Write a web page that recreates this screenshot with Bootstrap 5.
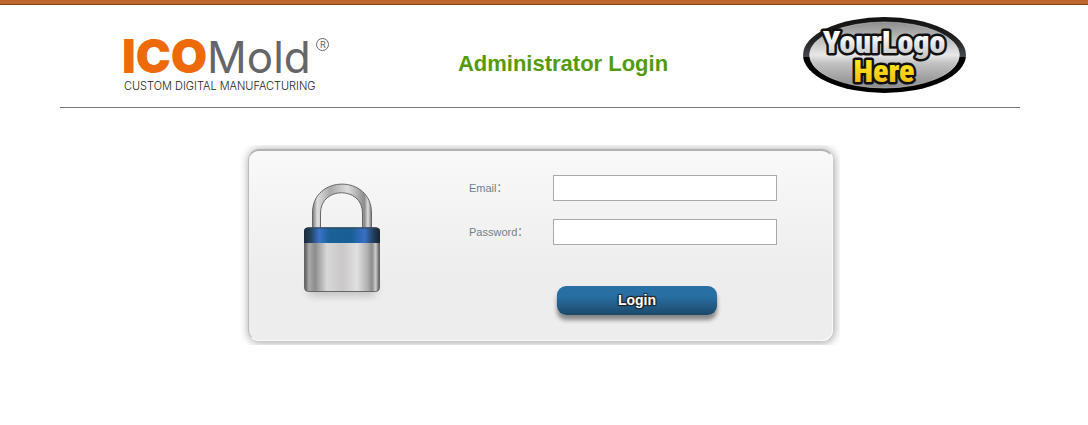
<!DOCTYPE html>
<html lang="en">
<head>
<meta charset="utf-8">
<meta name="viewport" content="width=device-width, initial-scale=1">
<title>Administrator Login</title>
<link href="https://cdn.jsdelivr.net/npm/bootstrap@5.3.0/dist/css/bootstrap.min.css" rel="stylesheet">
<style>
  body { font-family: "Liberation Sans", "Noto Sans CJK SC", sans-serif; background: #fff; }
  .top-strip { height: 5px; background: #bd662e; border-bottom: 1px solid #8b4216; }
  .page-wrap { padding-right: 8px; }
  .page { max-width: 960px; }
  .site-header { height: 103px; padding: 0 52px 0 60px; border-bottom: 1px solid #777; }
  .page-title { margin-top: 45px; font-size: 22px; line-height: 28px; font-weight: 700; color: #539b0c; }
  .brand-ico { font: 900 47px Inter, sans-serif; fill: #ee6908; }
  .brand-mold { font: 400 44px Inter, sans-serif; fill: #646668; }
  .brand-tag { font: 300 11px Inter, sans-serif; fill: #222; }
  .partner-line { font: 900 32px "Roboto Condensed", Roboto, sans-serif; paint-order: stroke; stroke: #111; stroke-width: 5px; stroke-linejoin: round; }
  .panel-frame { max-width: 600px; margin-top: 37px; padding: 4px 7px 4px 8px; overflow: hidden; }
  .panel { min-height: 192px; border: 1px solid #fafafa; border-top: 2px solid #b2b2b2; border-left-color: #bbb; border-radius: 11px; background: linear-gradient(#f9f9f9, #ededed 65%); box-shadow: 1px 1px 8px 1px #aaa; }
  .lock-cell { padding: 27px 0 0 49px; width: 220px; }
  .fields { padding-top: 24px; }
  .field-row { margin-bottom: 18px; }
  .field-label { width: 84px; font-size: 11px; line-height: 16px; color: #6c8388; }
  .field-box { width: 224px; height: 26px; border: 1px solid #a9a9a9; border-radius: 0; padding: 2px 4px; font-size: 13px; }
  .login-btn { width: 160px; height: 29px; margin: 41px 0 0 88px; padding: 0 0 2px; border: 0; border-radius: 9px; font-size: 14px; line-height: 20px; font-weight: 700; color: #fff; background: linear-gradient(#2870a4 35%, #1c4869); box-shadow: 0 5px 4px #888; text-shadow: 1px 1px 1px #222, -1px -1px 1px #222, 1px -1px 1px #222, -1px 1px 1px #222; }
</style>
</head>
<body>
<div class="top-strip"></div>
<div class="page-wrap">
<div class="page mx-auto">
  <header class="site-header d-flex justify-content-between align-items-start">
    <svg class="flex-shrink-0 mt-4 overflow-visible" width="206" height="70" viewBox="120 29 206 70" role="img" aria-label="ICOMold Custom Digital Manufacturing">
      <text class="brand-ico" x="122" y="73">ICO</text>
      <text class="brand-mold" x="207" y="73">Mold</text>
      <circle cx="322.500" cy="44.500" r="6" fill="none" stroke="#646668"/>
      <text x="320" y="48" font-family="Inter" font-size="9" fill="#646668">R</text>
      <text class="brand-tag" x="124" y="90">CUSTOM DIGITAL MANUFACTURING</text>
    </svg>
    <h1 class="page-title mb-0">Administrator Login</h1>
    <svg class="flex-shrink-0 mt-2" width="168" height="84" viewBox="800 13 168 84" role="img" aria-label="Your Logo Here">
      <defs>
        <linearGradient id="rim" x2="0" y2="1"><stop offset="0" stop-color="#111"/><stop offset=".3" stop-color="#222"/><stop offset=".52" stop-color="#44484e"/><stop offset=".53" stop-color="#000"/></linearGradient>
        <linearGradient id="plate" x2="0" y2="1"><stop offset="0" stop-color="#8d8d8d"/><stop offset=".5" stop-color="#e8e8e8"/><stop offset=".62" stop-color="#c3c3c3"/><stop offset="1" stop-color="#898989"/></linearGradient>
        <linearGradient id="silver" x2="0" y2="1"><stop offset=".3" stop-color="#fff"/><stop offset="1" stop-color="#bbb"/></linearGradient>
        <linearGradient id="gold" x2="0" y2="1"><stop offset=".3" stop-color="#ffe51c"/><stop offset="1" stop-color="#eaad12"/></linearGradient>
      </defs>
      <ellipse cx="884.500" cy="55" rx="81.500" ry="38" fill="url(#rim)"/>
      <ellipse cx="884.500" cy="55" rx="75" ry="33" fill="url(#plate)" stroke="#ddd" stroke-width=".5"/>
      <text class="partner-line" x="884" y="53" text-anchor="middle" fill="url(#silver)">YourLogo</text>
      <text class="partner-line" x="884" y="82" text-anchor="middle" fill="url(#gold)">Here</text>
    </svg>
  </header>

  <main class="panel-frame mx-auto">
    <form class="panel d-flex" onsubmit="return false">
      <div class="lock-cell flex-shrink-0">
        <svg width="90" height="124" viewBox="298 178 90 124" aria-hidden="true">
          <defs>
            <linearGradient id="steel"><stop offset="0" stop-color="#555"/><stop offset=".06" stop-color="#aaa"/><stop offset=".14" stop-color="#8c8c8c"/><stop offset=".3" stop-color="#d8d8d8"/><stop offset=".5" stop-color="#c9c7c8"/><stop offset=".7" stop-color="#e0e0e0"/><stop offset=".84" stop-color="#b0b0b0"/><stop offset=".9" stop-color="#8c8c8c"/><stop offset=".95" stop-color="#ccc"/><stop offset="1" stop-color="#555"/></linearGradient>
            <linearGradient id="band"><stop offset="0" stop-color="#1c2b38"/><stop offset=".09" stop-color="#24415d"/><stop offset=".2" stop-color="#3b73ca"/><stop offset=".33" stop-color="#1a6198"/><stop offset=".62" stop-color="#195f96"/><stop offset=".8" stop-color="#3970c5"/><stop offset=".92" stop-color="#203c56"/><stop offset="1" stop-color="#18232e"/></linearGradient>
            <linearGradient id="bow"><stop offset="0" stop-color="#777"/><stop offset=".08" stop-color="#ddd"/><stop offset=".3" stop-color="#aaa"/><stop offset=".6" stop-color="#ddd"/><stop offset=".88" stop-color="#8c8c8c"/><stop offset=".94" stop-color="#ddd"/><stop offset="1" stop-color="#777"/></linearGradient>
            <filter id="soft" x="-20%" y="-100%" width="140%" height="300%"><feGaussianBlur stdDeviation="4"/></filter>
          </defs>
          <rect x="308" y="282" width="68" height="14" rx="5" fill="#aaa" opacity=".65" filter="url(#soft)"/>
          <path d="M312.500 230V213C312.500 174.500 371.500 174.500 371.500 213V230H362.500V213C362.500 186 320.500 186 320.500 213V230Z" fill="url(#bow)" stroke="#666"/>
          <rect x="304.500" y="228" width="75" height="63.500" rx="4" fill="url(#steel)" stroke="#666"/>
          <path d="M304 243V231Q304 227.500 308 227.500H376Q380 227.500 380 231V243Z" fill="url(#band)"/>
          <path d="M307 228H377" stroke="#344553"/>
        </svg>
      </div>
      <div class="fields">
        <div class="field-row d-flex align-items-center">
          <label class="field-label" for="email">Email：</label>
          <input class="field-box" id="email" type="text">
        </div>
        <div class="field-row d-flex align-items-center">
          <label class="field-label" for="password">Password：</label>
          <input class="field-box" id="password" type="password">
        </div>
        <button class="login-btn d-block" type="submit">Login</button>
      </div>
    </form>
  </main>
</div>
</div>
<script src="https://cdn.jsdelivr.net/npm/bootstrap@5.3.0/dist/js/bootstrap.bundle.min.js"></script>
</body>
</html>
